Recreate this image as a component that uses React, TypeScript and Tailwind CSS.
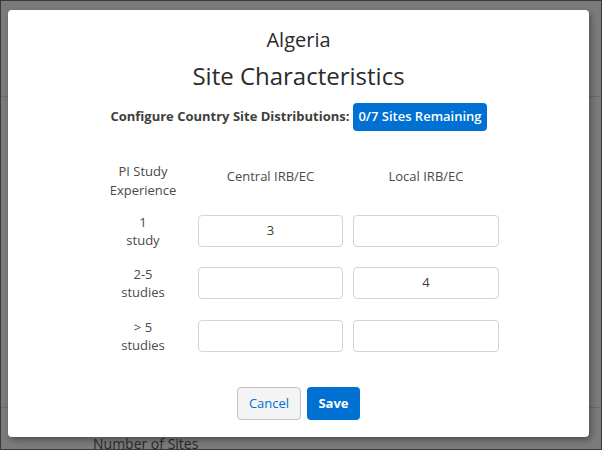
import React from "react";

const font = { fontFamily: '"Open Sans", "Noto Sans", sans-serif' };

function Cell({ value }: { value?: string }) {
  return (
    <div className="h-[32px] rounded-[4px] border border-[#d4d4d4] bg-white flex items-center justify-center text-[13px] text-[#3e3e3c]">
      {value ?? ""}
    </div>
  );
}

function RowLabel({ a, b }: { a: string; b: string }) {
  return (
    <div className="flex flex-col items-center text-[13px] leading-[18px] text-[#4a4a4a]">
      <span>{a}</span>
      <span>{b}</span>
    </div>
  );
}

export default function App() {
  const rows: { a: string; b: string; c?: string; l?: string; mt: string }[] = [
    { a: "1", b: "study", c: "3", mt: "mt-[13px]" },
    { a: "2-5", b: "studies", l: "4", mt: "mt-[16px]" },
    { a: "> 5", b: "studies", mt: "mt-[17px]" },
  ];
  return (
    <div
      className="relative w-[602px] h-[450px] overflow-hidden bg-[#7b7b7b] border border-[#3a3a3a]"
      style={font}
    >
      {/* background page */}
      <div className="pt-[95px]">
        <div className="h-px bg-[#6c6c6c]" />
        <div className="h-[310px]" />
        <div className="h-px bg-[#6c6c6c]" />
        <div className="pl-[92px] pt-[27px] text-[14px] leading-[18px] text-[#2a2a2a]">
          Number of Sites
        </div>
      </div>

      {/* modal */}
      <div className="absolute left-[7px] top-[9px] w-[581px] h-[427px] bg-white rounded-[4px] shadow-[2px_3px_6px_rgba(0,0,0,0.35)] flex flex-col items-center pt-[16px]">
        <div className="text-[20px] leading-[28px] text-[#2b2b2b]">Algeria</div>
        <div className="mt-[6px] text-[24px] leading-[32px] text-[#2b2b2b]">
          Site Characteristics
        </div>
        <div className="mt-[11px] flex items-center gap-[4px]">
          <span className="text-[13px] font-bold text-[#3e3e3c]">
            Configure Country Site Distributions:
          </span>
          <span className="h-[28px] px-[5px] rounded-[4px] bg-[#0070d2] text-white text-[13px] font-semibold flex items-center">
            0/7 Sites Remaining
          </span>
        </div>

        <div className="mt-[31px] grid grid-cols-[90px_145px_146px] gap-x-[10px]">
          <div className="flex flex-col items-center text-[13px] leading-[19px] text-[#4a4a4a]">
            <span>PI Study</span>
            <span>Experience</span>
          </div>
          <div className="pt-[5px] text-center text-[13px] leading-[19px] text-[#4a4a4a]">
            Central IRB/EC
          </div>
          <div className="pt-[5px] text-center text-[13px] leading-[19px] text-[#4a4a4a]">
            Local IRB/EC
          </div>

          {rows.map((r) => (
            <React.Fragment key={r.a}>
              <div className={`${r.mt} h-[36px] flex items-center justify-center`}>
                <RowLabel a={r.a} b={r.b} />
              </div>
              <div className={`${r.mt} h-[36px] flex flex-col justify-center`}>
                <Cell value={r.c} />
              </div>
              <div className={`${r.mt} h-[36px] flex flex-col justify-center`}>
                <Cell value={r.l} />
              </div>
            </React.Fragment>
          ))}
        </div>

        <div className="mt-[33px] flex gap-[6px]">
          <button className="h-[33px] w-[64px] rounded-[4px] border border-[#c2c2c2] bg-[#f4f4f4] text-[13px] text-[#0070d2]">
            Cancel
          </button>
          <button className="h-[33px] w-[53px] rounded-[4px] bg-[#0070d2] text-[13px] font-bold text-white">
            Save
          </button>
        </div>
      </div>
    </div>
  );
}
